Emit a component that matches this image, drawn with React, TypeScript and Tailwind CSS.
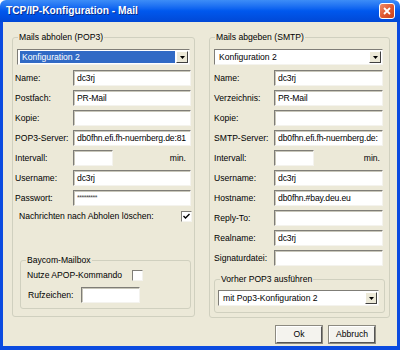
import type { ReactNode } from 'react';

// Sunken XP-classic edit box
function Field({ value, width, pw }: { value?: string; width: string; pw?: boolean }) {
	return (
		<div
			className={`${width} h-[16px] bg-white border border-t-[#7F7D77] border-l-[#7F7D77] border-b-[#F4F3EE] border-r-[#F4F3EE] shadow-[inset_1px_1px_0_#C9C7BA] flex items-center pl-[3px] overflow-hidden whitespace-nowrap ${
				pw ? 'text-[7px] tracking-[-0.5px] text-[#444]' : 'tracking-[-0.15px]'
			}`}
		>
			{value}
		</div>
	);
}

function DropArrow() {
	return (
		<div className="w-[12px] h-full bg-[#ECE9D8] border border-t-white border-l-white border-b-[#404040] border-r-[#404040] flex items-center justify-center">
			<svg width="5" height="3" viewBox="0 0 5 3">
				<path d="M0 0h5L2.5 3z" fill="#000" />
			</svg>
		</div>
	);
}

function Combo({ value, width, selected }: { value: string; width: string; selected?: boolean }) {
	return (
		<div
			className={`${width} h-[16px] bg-white border border-t-[#7F7D77] border-l-[#7F7D77] border-b-[#F4F3EE] border-r-[#F4F3EE] flex items-stretch p-[1px]`}
		>
			<div className="flex-1 flex items-center pl-[1px] pr-[1px]">
				<div
					className={`w-full h-full flex items-center pl-[2px] ${
						selected ? 'bg-[#316AC5] text-white' : ''
					}`}
				>
					{value}
				</div>
			</div>
			<DropArrow />
		</div>
	);
}

function Check({ checked }: { checked?: boolean }) {
	return (
		<div className="w-[11px] h-[11px] bg-white border border-t-[#7F7D77] border-l-[#7F7D77] border-b-[#F4F3EE] border-r-[#F4F3EE] flex items-center justify-center">
			{checked && (
				<svg width="7" height="7" viewBox="0 0 7 7">
					<path d="M0.5 3l2 2 4-4" stroke="#000" strokeWidth="1.4" fill="none" />
				</svg>
			)}
		</div>
	);
}

function Row({ label, labelW, children }: { label: string; labelW: string; children: ReactNode }) {
	return (
		<div className="h-[16px] flex items-center">
			<div className={`${labelW} shrink-0`}>{label}</div>
			{children}
		</div>
	);
}

function Group({ title, className, children }: { title: string; className: string; children: ReactNode }) {
	return (
		<fieldset className={`border border-[#D0D0BF] rounded-[3px] ${className}`}>
			<legend className="ml-[5px] px-[1px] leading-[12px]">{title}</legend>
			{children}
		</fieldset>
	);
}

function XpButton({ label }: { label: string }) {
	return (
		<div className="w-[46px] h-[17px] flex items-center justify-center bg-[#F4F3EE] border border-t-white border-l-white border-b-[#555] border-r-[#555] shadow-[0_0_0_1px_#8C8A80]">
			{label}
		</div>
	);
}

export default function App() {
	return (
		<div className="w-[400px] h-[350px] flex flex-col text-black text-[8.6px] font-['Liberation_Sans',Arial,sans-serif]">
			{/* Title bar */}
			<div className="h-[22px] shrink-0 bg-linear-to-b from-[#3D8DF7] via-[#0058EE] to-[#0148D6] flex items-center justify-between pl-[6px] pr-[5px] rounded-t-[6px]">
				<span className="text-white font-bold text-[10.2px] [text-shadow:1px_1px_0_#0A2C8C]">
					TCP/IP-Konfiguration - Mail
				</span>
				<div className="w-[16px] h-[16px] rounded-[3px] border border-white bg-linear-to-br from-[#EE8A6A] via-[#E05A32] to-[#C7401A] flex items-center justify-center">
					<svg width="8" height="8" viewBox="0 0 8 8">
						<path d="M1 1l6 6M7 1l-6 6" stroke="#fff" strokeWidth="1.8" />
					</svg>
				</div>
			</div>

			{/* Window body */}
			<div className="flex-1 flex flex-col bg-[#ECE9D8] border-l-[3px] border-r-[3px] border-b-[4px] border-[#0B4BE0]">
				<div className="flex items-start gap-[14px] pl-[9px] pt-[9px]">
					{/* POP3 */}
					<Group title="Mails abholen (POP3)" className="w-[183px] pb-[7px]">
						<div className="mt-[6px] ml-[4px]">
							<Combo value="Konfiguration 2" width="w-[173px]" selected />
						</div>
						<div className="mt-[5px] flex flex-col gap-[4px]">
							<Row label="Name:" labelW="w-[60px] pl-[2px]">
								<Field value="dc3rj" width="w-[118px]" />
							</Row>
							<Row label="Postfach:" labelW="w-[60px] pl-[2px]">
								<Field value="PR-Mail" width="w-[118px]" />
							</Row>
							<Row label="Kopie:" labelW="w-[60px] pl-[2px]">
								<Field width="w-[118px]" />
							</Row>
							<Row label="POP3-Server:" labelW="w-[60px] pl-[2px]">
								<Field value="db0fhn.efi.fh-nuernberg.de:81" width="w-[118px]" />
							</Row>
							<Row label="Intervall:" labelW="w-[60px] pl-[2px]">
								<Field width="w-[40px]" />
								<div className="flex-1 text-right pr-[8px]">min.</div>
							</Row>
							<Row label="Username:" labelW="w-[60px] pl-[2px]">
								<Field value="dc3rj" width="w-[118px]" />
							</Row>
							<Row label="Passwort:" labelW="w-[60px] pl-[2px]">
								<Field value="*********" width="w-[118px]" pw />
							</Row>
							<div className="h-[12px] flex items-center justify-between pl-[6px] pr-[2px]">
								<span>Nachrichten nach Abholen löschen:</span>
								<Check checked />
							</div>
						</div>

						<Group title="Baycom-Mailbox" className="mt-[32px] ml-[7px] w-[171px] pb-[5px]">
							<div className="mt-[4px] h-[11px] flex items-center pl-[6px]">
								<span className="w-[105px]">Nutze APOP-Kommando</span>
								<Check />
							</div>
							<div className="mt-[6px] h-[16px] flex items-center pl-[7px]">
								<span className="w-[53px]">Rufzeichen:</span>
								<Field width="w-[59px]" />
							</div>
						</Group>
					</Group>

					{/* SMTP */}
					<Group title="Mails abgeben (SMTP)" className="w-[181px] pb-[4px]">
						<div className="mt-[6px] ml-[4px]">
							<Combo value="Konfiguration 2" width="w-[169px]" />
						</div>
						<div className="mt-[5px] flex flex-col gap-[4px]">
							<Row label="Name:" labelW="w-[64px] pl-[4px]">
								<Field value="dc3rj" width="w-[109px]" />
							</Row>
							<Row label="Verzeichnis:" labelW="w-[64px] pl-[4px]">
								<Field value="PR-Mail" width="w-[109px]" />
							</Row>
							<Row label="Kopie:" labelW="w-[64px] pl-[4px]">
								<Field width="w-[109px]" />
							</Row>
							<Row label="SMTP-Server:" labelW="w-[64px] pl-[4px]">
								<Field value="db0fhn.efi.fh-nuernberg.de:" width="w-[109px]" />
							</Row>
							<Row label="Intervall:" labelW="w-[64px] pl-[4px]">
								<Field width="w-[40px]" />
								<div className="flex-1 text-right pr-[9px]">min.</div>
							</Row>
							<Row label="Username:" labelW="w-[64px] pl-[4px]">
								<Field value="dc3rj" width="w-[109px]" />
							</Row>
							<Row label="Hostname:" labelW="w-[64px] pl-[4px]">
								<Field value="db0fhn.#bay.deu.eu" width="w-[109px]" />
							</Row>
							<Row label="Reply-To:" labelW="w-[64px] pl-[4px]">
								<Field width="w-[109px]" />
							</Row>
							<Row label="Realname:" labelW="w-[64px] pl-[4px]">
								<Field value="dc3rj" width="w-[109px]" />
							</Row>
							<Row label="Signaturdatei:" labelW="w-[64px] pl-[4px]">
								<Field width="w-[109px]" />
							</Row>
						</div>

						<Group title="Vorher POP3 ausführen" className="mt-[7px] ml-[4px] w-[171px] pb-[6px]">
							<div className="mt-[5px] ml-[3px]">
								<Combo value="mit Pop3-Konfiguration 2" width="w-[161px]" />
							</div>
						</Group>
					</Group>
				</div>

				{/* Buttons */}
				<div className="mt-[8px] flex justify-end gap-[7px] pr-[22px]">
					<XpButton label="Ok" />
					<XpButton label="Abbruch" />
				</div>
			</div>
		</div>
	);
}
